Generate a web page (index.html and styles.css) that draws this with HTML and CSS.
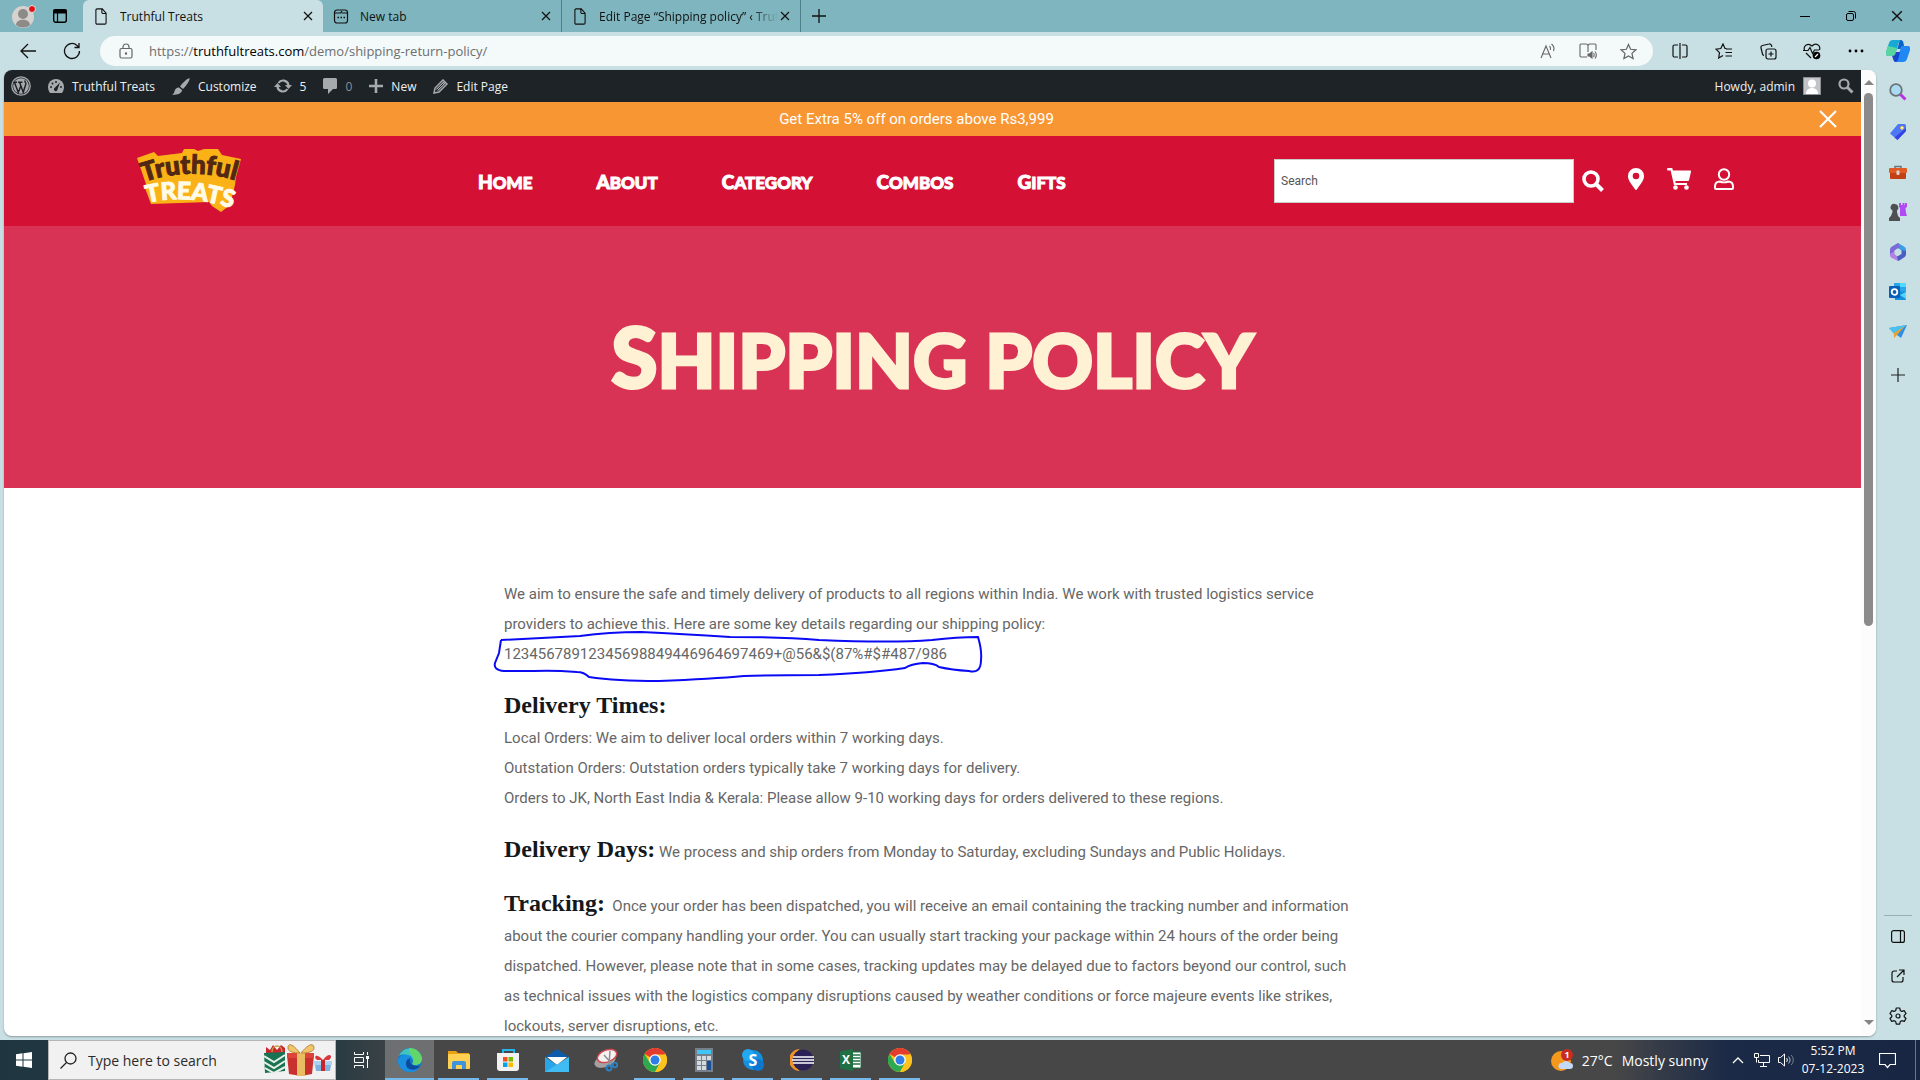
FILE: index.html
```
<!DOCTYPE html>
<html lang="en">
<head>
    <meta charset="UTF-8">
    <meta name="viewport" content="width=device-width, initial-scale=1.0">
    <title>Truthful Treats</title>
    <link rel="stylesheet" href="styles.css">
</head>
<body>
    <svg class="sprite" aria-hidden="true">
        <symbol id="doc" viewBox="0 0 14 20"><path d="M2.500 1h6L13 6v11.500a1.500 1.500 0 0 1-1.500 1.500h-9A1.500 1.500 0 0 1 1 17.500v-15A1.500 1.500 0 0 1 2.500 1zM8 1v4a1.500 1.500 0 0 0 1.500 1.500H13" fill="none" stroke="#111" stroke-width="1.300"/></symbol>
        <symbol id="cross" viewBox="0 0 10 10"><path d="M1 1l8 8M9 1L1 9" fill="none" stroke="currentColor" stroke-width="1.200"/></symbol>
        <symbol id="chrome" viewBox="0 0 24 24">
            <circle cx="12" cy="12" r="12" fill="#fcc31e"/>
            <path d="M12 12L1.600 6A12 12 0 0 1 22.400 6z" fill="#e33b2e"/>
            <path d="M1.600 6A12 12 0 0 0 12 24l5-9H7z" fill="#2da94f"/>
            <path d="M12 6.500h10.700A12 12 0 0 1 12 24l5-9z" fill="#fcc31e"/>
            <circle cx="12" cy="12" r="5.800" fill="#fff"/>
            <circle cx="12" cy="12" r="4.500" fill="#2f7de9"/>
        </symbol>
    </svg>

    <!-- browser tabs -->
    <div class="titlebar">
        <button class="profile" aria-label="Profile">
            <svg width="24" height="24" viewBox="0 0 24 24"><circle cx="11" cy="13" r="11" fill="#d5d2cf"/><circle cx="11" cy="10" r="5" fill="#8e8a87"/><path d="M4 21c0-7 14-7 14 0a11 11 0 0 1-14 0z" fill="#8e8a87"/><circle cx="20" cy="5" r="3.500" fill="#e60f0f" stroke="#d9e6e8"/></svg>
        </button>
        <button class="workspaces" aria-label="Tab actions">
            <svg width="14" height="14" viewBox="0 0 14 14"><rect x="0.700" y="0.700" width="12.600" height="12.600" rx="2" fill="none" stroke="#000" stroke-width="1.400"/><path d="M1 1h12v3H1zM4.500 4v9" stroke="#000" stroke-width="1.200"/></svg>
        </button>
        <div class="tab active">
            <svg class="tab-icon" width="14" height="17"><use href="#doc"/></svg>
            <span class="tab-title">Truthful Treats</span>
            <button aria-label="Close tab"><svg width="10" height="10"><use href="#cross"/></svg></button>
        </div>
        <div class="tab">
            <svg class="tab-icon" width="15" height="15" viewBox="0 0 15 15" fill="none" stroke="#111" stroke-width="1.200"><rect x="1" y="1" width="13" height="13" rx="2.500"/><path d="M1 4h6l1.500-2M8 4h6"/><path d="M4 8.500h1.500M7 8.500h1.500M10 8.500h1.500" stroke-width="1.600"/></svg>
            <span class="tab-title">New tab</span>
            <button aria-label="Close tab"><svg width="10" height="10"><use href="#cross"/></svg></button>
        </div>
        <div class="tab">
            <svg class="tab-icon" width="14" height="17"><use href="#doc"/></svg>
            <span class="tab-title fade">Edit Page “Shipping policy” ‹ Trut</span>
            <button aria-label="Close tab"><svg width="10" height="10"><use href="#cross"/></svg></button>
        </div>
        <button class="new-tab" aria-label="New tab"><svg width="14" height="14" viewBox="0 0 14 14"><path d="M7 0v14M0 7h14" stroke="#111" stroke-width="1.300"/></svg></button>
        <div class="window-buttons">
            <button aria-label="Minimize"><svg width="12" height="12" viewBox="0 0 12 12"><path d="M1 6.500h10" stroke="#000"/></svg></button>
            <button aria-label="Restore"><svg width="12" height="12" viewBox="0 0 12 12" fill="none" stroke="#000"><rect x="1.500" y="3.500" width="7" height="7" rx="1.500"/><path d="M3.500 1.500h5a2 2 0 0 1 2 2v5"/></svg></button>
            <button aria-label="Close"><svg width="12" height="12"><use href="#cross"/></svg></button>
        </div>
    </div>

    <!-- address bar -->
    <div class="toolbar">
        <button aria-label="Back"><svg width="18" height="18" viewBox="0 0 18 18" fill="none" stroke="#111" stroke-width="1.300"><path d="M17 9H2M9 2L2 9l7 7"/></svg></button>
        <button aria-label="Refresh"><svg width="18" height="18" viewBox="0 0 18 18" fill="none" stroke="#111" stroke-width="1.300"><path d="M16.500 9a7.500 7.500 0 1 1-2.500-5.600L16 5.500M16 1v4.500h-4.500"/></svg></button>
        <div class="address">
            <svg width="14" height="16" viewBox="0 0 14 16" fill="none" stroke="#666" stroke-width="1.200"><rect x="1" y="5.500" width="12" height="9.500" rx="1.500"/><path d="M4 5.500V4a3 3 0 0 1 6 0v1.500"/><circle cx="7" cy="10.500" r="0.600" fill="#666"/></svg>
            <a class="url" href="#">https://<b>truthfultreats.com</b>/demo/shipping-return-policy/</a>
            <button aria-label="Read aloud"><svg width="16" height="16" viewBox="0 0 16 16" fill="none" stroke="#666" stroke-width="1.100"><path d="M1 15L6 3l5 12M3 11h6M9.500 3c1 1 1.300 2 1 4M11.500 1c2.500 2 3 4.500 2 7"/></svg></button>
            <button aria-label="Immersive reader"><svg width="18" height="16" viewBox="0 0 18 16" fill="none" stroke="#666" stroke-width="1.100"><path d="M8 14H2a1 1 0 0 1-1-1V2a1 1 0 0 1 1-1h5a2 2 0 0 1 2 2v6M9 3a2 2 0 0 1 2-2h5a1 1 0 0 1 1 1v5"/><path d="M9 11h1.500L13 9v6l-2.500-2H9z" fill="#666"/><path d="M14.500 10c.800 1.200.800 2.800 0 4M16 8.500c1.500 2 1.500 5 0 7"/></svg></button>
            <button aria-label="Favorite"><svg width="17" height="17" viewBox="0 0 24 24" fill="none" stroke="#666" stroke-width="1.700"><path d="M12 2l3 6.800 7.500.8-5.600 5 1.600 7.400L12 18.300 5.500 22l1.600-7.400-5.600-5L9 8.800z"/></svg></button>
        </div>
        <div class="extensions">
            <button aria-label="Split screen"><svg width="16" height="16" viewBox="0 0 16 16" fill="none" stroke="#111" stroke-width="1.200"><path d="M8 0v16M6 2H2.500A1.500 1.500 0 0 0 1 3.500v9A1.500 1.500 0 0 0 2.500 14H6M10 2h3.500A1.500 1.500 0 0 1 15 3.500v9a1.500 1.500 0 0 1-1.500 1.500H10"/></svg></button>
            <button aria-label="Favorites"><svg width="18" height="16" viewBox="0 0 18 16" fill="none" stroke="#111" stroke-width="1.200"><path d="M11.500 5.500H10L8 1 5.800 5.500 1 6.200l3.500 3.500L3.700 15 8 12.500M11 6h6M10.500 9.500H17M10.500 13H17"/></svg></button>
            <button aria-label="Collections"><svg width="17" height="17" viewBox="0 0 17 17" fill="none" stroke="#111" stroke-width="1.200"><rect x="6" y="6" width="10" height="10" rx="2"/><path d="M11 8.500v5M8.500 11h5M4 12.500A2 2 0 0 1 2.500 11L1 5a2 2 0 0 1 1.500-2.500L9 1a2 2 0 0 1 2.500 1.500l.3 1.500"/></svg></button>
            <button aria-label="Browser essentials"><svg width="18" height="17" viewBox="0 0 18 17" fill="none" stroke="#111" stroke-width="1.200"><path d="M8 15L3 10M1.500 7C0 3 5 -1 9 3c4-4 9-.500 7.500 4M0 7.500h5l2-3 2.500 6 2-3.500H16"/><circle cx="13.500" cy="12.500" r="3.800" fill="#000" stroke="none"/><path d="M12 14l3-3" stroke="#fff"/></svg></button>
            <button aria-label="Settings and more"><svg width="16" height="4" viewBox="0 0 16 4"><circle cx="2" cy="2" r="1.400"/><circle cx="8" cy="2" r="1.400"/><circle cx="14" cy="2" r="1.400"/></svg></button>
        </div>
        <button class="copilot" aria-label="Copilot"><svg width="24" height="22" viewBox="0 0 24 22"><path d="M7 0h8c-2 1-2.500 3-3.500 7l-2 6c-.700 2-1.500 3-3.500 3H2c-2 0-2.500-2-2-4L3 3c.5-2 2-3 4-3z" fill="#16a9d4"/><path d="M0 12L2 6l9 2-1.500 5c-.700 2-1.500 3-3.500 3H2c-2 0-2.500-2-2-4z" fill="#58d6a0"/><path d="M17 22H9c2-1 2.500-3 3.500-7l2-6c.7-2 1.500-3 3.500-3h4c2 0 2.500 2 2 4l-3 9c-.500 2-2 3-4 3z" fill="#2187f5"/><path d="M6 16c2.500 0 3-1 4-4l4 0-1.500 6c-.700 2.500-1.500 4-3 4-2 0-2-3-3.500-6z" fill="#1846c9"/><path d="M15 0c2 0 2.500 2 3 6-2 0-3 1-3.500 3h-3.200L13 3c.5-2 .8-3 2-3z" fill="#0a63c9"/></svg></button>
    </div>

    <div class="workarea">
        <div class="viewport">
            <div class="site">
                <!-- admin bar -->
                <div class="adminbar">
                    <a href="#" class="wp" aria-label="About WordPress"><svg width="20" height="20" viewBox="0 0 20 20"><circle cx="10" cy="10" r="9.200" fill="none" stroke="#a7aaad" stroke-width="1.300"/><circle cx="10" cy="10" r="7.800" fill="#a7aaad"/><path d="M3.500 6.500l3.800 10L10 9.500M8.500 6l3.700 10.300 2.600-8c.400-1.500-1-2-1-3.800M2.500 6.200H6M7 6.200h4.500" fill="none" stroke="#1d2327" stroke-width="1.500"/></svg></a>
                    <a href="#"><svg width="16" height="14" viewBox="0 0 16 14"><path d="M8 0a8 8 0 0 1 8 8c0 2.500-1 4.500-2 6H2C1 12.500 0 10.500 0 8a8 8 0 0 1 8-8z" fill="#a7aaad"/><g fill="#1d2327"><circle cx="3" cy="8" r="1"/><circle cx="4.500" cy="4.500" r="1"/><circle cx="8" cy="3" r="1"/><circle cx="13" cy="8" r="1"/><path d="M12 3.500l-2.500 7a1.800 1.800 0 1 1-3-1.500z"/></g></svg>Truthful Treats</a>
                    <a href="#"><svg width="18" height="17" viewBox="0 0 18 17" fill="#a7aaad"><path d="M17.500.500c1 1-3 7-6.500 10.500L8 8.500C11 4.500 16.500-.500 17.500.500zM7 9.500l3 2.500c0 3-4 5.500-10 4.500 2.500-1 2-2 3-4.500.800-2 2.500-2.800 4-2.500z"/></svg>Customize</a>
                    <a href="#"><svg width="18" height="16" viewBox="0 0 18 16" fill="none" stroke="#a7aaad" stroke-width="2.200"><path d="M3.500 9a5.500 5.500 0 0 0 10 2M14.500 7a5.500 5.500 0 0 0-10-2"/><path d="M0 9l3.500-4L7 9zM11 7l3.500 4L18 7z" fill="#a7aaad" stroke="none"/></svg>5</a>
                    <a href="#" class="dim"><svg width="14" height="16" viewBox="0 0 14 16" fill="#a7aaad"><path d="M1.500 0h11A1.500 1.500 0 0 1 14 1.500v8a1.500 1.500 0 0 1-1.500 1.500H10l-5 5v-5H1.500A1.500 1.500 0 0 1 0 9.500v-8A1.500 1.500 0 0 1 1.500 0z"/></svg>0</a>
                    <a href="#"><svg width="14" height="14" viewBox="0 0 14 14"><path d="M7 0v14M0 7h14" stroke="#a7aaad" stroke-width="2.600"/></svg>New</a>
                    <a href="#"><svg width="15" height="15" viewBox="0 0 15 15"><path d="M1 14l1-5 8-8 4 4-8 8z" fill="none" stroke="#a7aaad" stroke-width="1.500"/><path d="M3 10l7.500-7.500 2 2L5 12z" fill="#a7aaad"/><path d="M3.500 11.500l7-7" stroke="#1d2327"/></svg>Edit Page</a>
                    <a href="#" class="howdy">Howdy, admin<svg width="18" height="18" viewBox="0 0 18 18"><path fill="#c3c4c7" stroke="#8c8f94" d="M.500.500h17v17H.500z"/><circle cx="9" cy="6.500" r="4" fill="#fff"/><path d="M3 17c0-8 12-8 12 0z" fill="#fff"/></svg></a>
                    <button aria-label="Search site"><svg width="16" height="16" viewBox="0 0 16 16" fill="none" stroke="#a7aaad"><circle cx="6" cy="6" r="4.500" stroke-width="2.200"/><path d="M9.500 9.500l5 5" stroke-width="3"/></svg></button>
                </div>

                <div class="offer">
                    <span>Get Extra 5% off on orders above Rs3,999</span>
                    <button aria-label="Dismiss"><svg width="18" height="18" viewBox="0 0 18 18"><path d="M1 1l16 16M17 1L1 17" stroke="#fff" stroke-width="2.200"/></svg></button>
                </div>

                <header class="site-header">
                    <a href="#" class="logo" aria-label="Truthful Treats">
                        <svg width="108" height="66" viewBox="0 0 108 66">
                            <defs>
                                <path id="arc-top" d="M8 34Q54 18 102 33"/>
                                <path id="arc-bottom" d="M11 55Q50 45 98 61"/>
                            </defs>
                            <path d="M1 10l17-6 4 4 24-3 2-4h10l4 2 6-2h14l4 6 19 4-5 18-1 8-5 20-9 7-9-6-3-4-58 2-6-16 1-4z" fill="#fbb216"/>
                            <text class="logo-top"><textPath href="#arc-top">Truthful</textPath></text>
                            <text class="logo-bottom"><textPath href="#arc-bottom">TREATS</textPath></text>
                        </svg>
                    </a>
                    <nav>
                        <a href="#">Home</a>
                        <a href="#">About</a>
                        <a href="#">Category</a>
                        <a href="#">Combos</a>
                        <a href="#">Gifts</a>
                    </nav>
                    <form class="site-search">
                        <input type="text" placeholder="Search" aria-label="Search products">
                        <button type="button" aria-label="Search"><svg width="22" height="22" viewBox="0 0 22 22" fill="none" stroke="#fff"><circle cx="9" cy="9" r="7" stroke-width="3.600"/><path d="M14 14l6.500 6.500" stroke-width="4"/></svg></button>
                    </form>
                    <div class="shortcuts">
                        <a href="#" aria-label="Stores"><svg width="16" height="22" viewBox="0 0 16 22"><path fill-rule="evenodd" fill="#fff" d="M8 0a8 8 0 0 1 8 8c0 4-2 6-7 13.300a1.200 1.200 0 0 1-2 0C2 14 0 12 0 8a8 8 0 0 1 8-8zm0 4.700a3.300 3.300 0 1 0 0 6.600 3.300 3.300 0 0 0 0-6.600z"/></svg></a>
                        <a href="#" aria-label="Cart"><svg width="24" height="22" viewBox="0 0 24 22" fill="#fff"><path d="M0 1a1 1 0 0 1 1-1h4.300l.6 2.500H23a1 1 0 0 1 1 1.300l-2 8.500a1 1 0 0 1-1 .8H8.300l.4 1.900h11.500l-.4 2H7L3.600 2.500H1A1 1 0 0 1 0 1.500z"/><circle cx="8.500" cy="19.500" r="2.300"/><circle cx="19.500" cy="19.500" r="2.300"/></svg></a>
                        <a href="#" aria-label="Account"><svg width="20" height="22" viewBox="0 0 20 22" fill="none" stroke="#fff" stroke-width="2"><circle cx="10" cy="6.500" r="5.200"/><path d="M6 13.500c2 1 6 1 8 0 3 0 5 2 5 5V20a1 1 0 0 1-1 1H2a1 1 0 0 1-1-1v-1.500c0-3 2-5 5-5z"/></svg></a>
                    </div>
                </header>

                <section class="hero">
                    <h1>Shipping policy</h1>
                </section>

                <main class="policy">
                    <p>
                        We aim to ensure the safe and timely delivery of products to all regions within India. We work with trusted logistics service providers to achieve this. Here are some key details regarding our shipping policy:<br>
                        <span class="marked">12345678912345698849446964697469+@56&amp;$(87%#$#487/986
                            <svg class="scribble" width="494" height="56" viewBox="0 0 494 56"><path d="M9 10Q48 8 88 6Q117 2 149 2Q190 4 238 7Q290 7 327 10Q400 13 440 10Q465 7 486 7Q490 20 489 30Q489 44 477 41Q460 40 447 37Q442 33 431 33Q419 34 413 38Q380 43 327 45Q280 45 252 46Q220 49 167 51Q124 51 97 47Q92 42 85 42Q60 40 42 41L12 41Q1 40 3 33L7 23L9 10"/></svg>
                        </span>
                    </p>
                    <p>
                        <strong>Delivery Times:</strong><br>
                        Local Orders: We aim to deliver local orders within 7 working days.<br>
                        Outstation Orders: Outstation orders typically take 7 working days for delivery.<br>
                        Orders to JK, North East India &amp; Kerala: Please allow 9-10 working days for orders delivered to these regions.
                    </p>
                    <p><strong>Delivery Days:</strong> We process and ship orders from Monday to Saturday, excluding Sundays and Public Holidays.</p>
                    <p><strong>Tracking:</strong>&nbsp; Once your order has been dispatched, you will receive an email containing the tracking number and information about the courier company handling your order. You can usually start tracking your package within 24 hours of the order being dispatched. However, please note that in some cases, tracking updates may be delayed due to factors beyond our control, such as technical issues with the logistics company disruptions caused by weather conditions or force majeure events like strikes, lockouts, server disruptions, etc.</p>
                </main>
            </div>
            <div class="scrollbar">
                <svg width="10" height="6" viewBox="0 0 10 6"><path d="M0 6l5-5 5 5z" fill="#858585"/></svg>
                <div class="track"><div class="thumb"></div></div>
                <svg width="10" height="6" viewBox="0 0 10 6"><path d="M0 0l5 5 5-5z" fill="#858585"/></svg>
            </div>
        </div>

        <aside class="sidebar">
            <button aria-label="Search"><svg width="18" height="18" viewBox="0 0 18 18"><circle cx="7" cy="7" r="5.800" fill="#a9dcf2" stroke="#6d7478" stroke-width="1.800"/><path d="M11.500 11.500l5 5" stroke="#b833e8" stroke-width="3"/></svg></button>
            <button aria-label="Shopping"><svg width="18" height="18" viewBox="0 0 18 18"><path d="M9 1h6.500A1.500 1.500 0 0 1 17 2.500V8l-8.500 9L1 10.500z" fill="#4c78f6"/><path d="M17 5v3l-8.500 9-3-2.500z" fill="#3442e6"/><circle cx="13" cy="4.800" r="1.500" fill="#fff" stroke="#f2c230"/></svg></button>
            <button aria-label="Tools"><svg width="18" height="18" viewBox="0 0 18 18"><path d="M6 5V3.500h6V5" fill="none" stroke="#6d7478" stroke-width="1.500"/><rect y="5" width="18" height="5" rx="1" fill="#e05a24"/><path d="M1 10h16v5a1 1 0 0 1-1 1H2a1 1 0 0 1-1-1z" fill="#c33f14"/><rect x="7.500" y="7.500" width="3" height="4.500" rx="1" fill="#d5dadd"/></svg></button>
            <button aria-label="Games"><svg width="18" height="18" viewBox="0 0 18 18"><path d="M10 0h2v2h1.500V0h2v2H16V0h2v4l-1.500 1 .5 5 1 3h-7V5L10 4z" fill="#b14af2"/><path d="M6 1a3.500 3.500 0 0 1 2 6.300V9L9 13l2 2v3H0v-3l2-2 1.500-4V7.500A3.500 3.500 0 0 1 6 1z" fill="#4d4f50"/></svg></button>
            <button aria-label="Microsoft 365"><svg width="18" height="18" viewBox="0 0 18 18"><path d="M9 0l6 3.500c1.500 1 2 2 2 3.500v5l-4.500-2V7.500L8.500 5 5 3z" fill="#3a9de8"/><path d="M9 0L3 3.500C1.500 4.500 1 5.500 1 7v5l4.500-1.500v-3L11 4z" fill="#7c6ad6"/><path d="M1 11v1c0 1.500.5 2 2 3l6 3 4-2-1-4-3.500 1.500L5.500 11V8z" fill="#b083e4"/><path d="M17 8v3c0 1.500-.5 2.500-2 3.500L9 18l-1-4.500 4.500-3V7z" fill="#4a5fc4"/><path d="M9 5.500l3.300 2v3.500L9 13l-3.300-2V7.500z" fill="#c8dfe3"/></svg></button>
            <button aria-label="Outlook"><svg width="18" height="18" viewBox="0 0 18 18"><path d="M5 0h12v9H5z" fill="#28a8ea"/><path d="M11 0h6v4h-6z" fill="#50d9ff"/><path d="M5 7l12 2v7a1 1 0 0 1-1 1H6z" fill="#1490df"/><path d="M17 9v7l-6-4z" fill="#50d9ff"/><rect y="3" width="11" height="12" rx="1" fill="#0a5fb8"/><circle cx="5.500" cy="9" r="2.800" fill="none" stroke="#fff" stroke-width="1.800"/></svg></button>
            <button aria-label="Drop"><svg width="18" height="18" viewBox="0 0 18 18"><path d="M0 5l18-3-6 13-4-3z" fill="#2f8fe8"/><path d="M0 5l18-3L5 11z" fill="#49c0f0"/><path d="M5 10L16 3 8 12l-3 3z" fill="#e9a32b"/></svg></button>
            <button aria-label="Customize sidebar" class="add"><svg width="14" height="14" viewBox="0 0 14 14"><path d="M7 0v14M0 7h14" stroke="#222" stroke-width="1.200"/></svg></button>
            <div class="sidebar-bottom">
                <button aria-label="Hide sidebar"><svg width="14" height="13" viewBox="0 0 14 13" fill="none" stroke="#111" stroke-width="1.200"><rect x="0.600" y="0.600" width="12.800" height="11.800" rx="2"/><path d="M9.500 0v13"/></svg></button>
                <button aria-label="Open link"><svg width="14" height="14" viewBox="0 0 14 14" fill="none" stroke="#111" stroke-width="1.200"><path d="M6 2H3a2 2 0 0 0-2 2v7a2 2 0 0 0 2 2h7a2 2 0 0 0 2-2V8M8 1h5v5M13 1L6 8"/></svg></button>
                <button aria-label="Settings"><svg width="18" height="18" viewBox="0 0 18 18" fill="none" stroke="#111" stroke-width="1.200"><circle cx="9" cy="9" r="2"/><path d="M7.300 1h3.400l.6 2.500 1.500.9 2.500-.7L17 6.600l-1.800 1.800v1.400L17 11.500l-1.700 2.900-2.500-.7-1.500.9-.6 2.500H7.300l-.6-2.500-1.500-.9-2.500.7L1 11.500l1.800-1.700V8.400L1 6.600l1.700-2.900 2.500.7 1.500-.9z" stroke-linejoin="round"/></svg></button>
            </div>
        </aside>
    </div>

    <!-- windows taskbar -->
    <div class="taskbar">
        <button class="start" aria-label="Start"><svg width="16" height="16" viewBox="0 0 16 16" fill="#fff"><path d="M0 2.300L6.500 1.300v6.200H0zM7.500 1.200L16 0v7.500H7.500zM0 8.500h6.500v6.200L0 13.700zM7.500 8.500H16V16l-8.500-1.200z"/></svg></button>
        <label class="task-search">
            <svg width="17" height="17" viewBox="0 0 17 17" fill="none" stroke="#222" stroke-width="1.300"><circle cx="10.500" cy="6.500" r="5.500"/><path d="M6.500 10.500L0.500 16.500"/></svg>
            <input type="text" placeholder="Type here to search">
            <svg width="68" height="34" viewBox="0 0 68 34">
                <path d="M2 10V4l4 3 3-5 4 5 4-5 4 3v6z" fill="#c9252c"/><path d="M8 9c0-8 10-8 10 0" fill="none" stroke="#c99b4a" stroke-width="1.500"/>
                <path d="M0 10l21-1v19L1 30z" fill="#197253"/>
                <path d="M0 13l10 6 11-7M0 19l10 6 11-7M1 25l9 5 11-6" fill="none" stroke="#e8efe4" stroke-width="2"/>
                <path d="M23 12h27l-2 19-11 2-12-2z" fill="#c8312d"/><path d="M23 10h27v5H23z" fill="#dd4338"/>
                <path d="M33 10h8v23h-8z" fill="#e9bd62"/><path d="M36 10C28 0 24 0 24 5c0 4 6 5 12 5zM37 10C45 0 50 0 50 5c0 4-7 5-13 5z" fill="#efc66c" stroke="#b98634"/>
                <path d="M50 18h18v4H50z" fill="#a9d3f0"/><path d="M51 22h16l-1 6H52z" fill="#7fb3df"/><path d="M57 17h4v11h-4z" fill="#c9252c"/><path d="M59 17c-7-8-10-3-6 0zM59 17c6-9 11-4 6 0z" fill="#d8383c"/>
            </svg>
        </label>
        <button class="task" aria-label="Task view"><svg width="16" height="16" viewBox="0 0 16 16" fill="none" stroke="#fff"><path d="M1.500 0v2.500h9V0M1.500 16v-2.500h9V16M1.500 5.500h9v5h-9zM14.500 0v3M14.500 7v9"/><path d="M13 4h3v3h-3z" fill="#fff" stroke="none"/></svg></button>
        <button class="task current" aria-label="Edge"><svg width="24" height="24" viewBox="0 0 24 24"><circle cx="12" cy="12" r="12" fill="#1677c9"/><path d="M1 8C5-2 20-3 24 10c0 5-3 7-7 7-3 0-3-1-2-3 1-5-8-10-14-6z" fill="#3fc4c0"/><path d="M11 0c8 0 12 5 13 10 0 5-3 7-7 7-2 0-3-1-2-3C18 9 10 6 11 0z" fill="#62d66b"/><path d="M0 13C1 6 9 5 14 9c-6 0-8 8-2 12 3 2 7 1 10-2-3 4-6 5-10 5C5 24 0 19 0 13z" fill="#1a8fe0"/><path d="M8 16c0-3 1-5 4-5-1 4 2 8 10 7-3 5-14 5-14-2z" fill="#0d4b9c"/></svg></button>
        <button class="task open" aria-label="File Explorer"><svg width="22" height="20" viewBox="0 0 22 20"><path d="M0 1h8l2 2h11v4H0z" fill="#e8a213"/><rect y="4" width="22" height="15" rx="1" fill="#ffd152"/><path d="M4 19v-6a2 2 0 0 1 2-2h10a2 2 0 0 1 2 2v6h-4v-4H8v4z" fill="#3f93dc"/></svg></button>
        <button class="task open" aria-label="Store"><svg width="24" height="24" viewBox="0 0 24 24"><path d="M7 6V2h11v4" fill="none" stroke="#24b5ef" stroke-width="2"/><path d="M1 5h22v15a3 3 0 0 1-3 3H4a3 3 0 0 1-3-3z" fill="#f2f2f2"/><path d="M7 9h4.500v4.500H7z" fill="#f25022"/><path d="M12.500 9H17v4.500h-4.500z" fill="#7fba00"/><path d="M7 14.500h4.500V19H7z" fill="#00a4ef"/><path d="M12.500 14.500H17V19h-4.500z" fill="#ffb900"/></svg></button>
        <button class="task" aria-label="Mail"><svg width="24" height="23" viewBox="0 0 24 23"><path d="M0 8l12-8 12 8z" fill="#0c5cab"/><path d="M2 8h20l-10 8z" fill="#fff"/><path d="M0 8l12 8 12-8v15H0z" fill="#29a5ea"/><path d="M24 8v15H0z" fill="#4cc4f7" opacity=".7"/></svg></button>
        <button class="task" aria-label="Snipping Tool"><svg width="24" height="24" viewBox="0 0 24 24"><ellipse cx="11" cy="13" rx="11" ry="6" transform="rotate(-20 11 13)" fill="#a6a0a0"/><ellipse cx="13" cy="8" rx="10" ry="6" transform="rotate(-20 13 8)" fill="#f7f2f2" stroke="#cf4a50" stroke-width="1.500"/><path d="M10 7l9 10M16 3l-1 14" stroke="#8d9093" stroke-width="1.500"/><g fill="none" stroke="#2c83c4" stroke-width="1.800"><circle cx="15" cy="20" r="2.500"/><circle cx="21" cy="17" r="2.300"/></g></svg></button>
        <button class="task open" aria-label="Chrome"><svg width="24" height="24"><use href="#chrome"/></svg></button>
        <button class="task open" aria-label="Calculator"><svg width="18" height="24" viewBox="0 0 18 24"><path d="M0 0h18v24H0z" fill="#75808c"/><path d="M2 2h14v4H2z" fill="#3fc6f4"/><path d="M2 8h4v4H2zM7 8h4v4H7zM12 8h4v4h-4zM2 13h4v4H2zM7 13h4v4H7zM2 18h4v4H2zM7 18h4v4H7z" fill="#d5dade"/><path d="M12 13h4v9h-4z" fill="#174e96"/></svg></button>
        <button class="task open" aria-label="Skype"><svg width="22" height="22" viewBox="0 0 22 22"><circle cx="11" cy="11" r="10" fill="#1490df"/><circle cx="6" cy="6" r="6" fill="#22a7f2"/><circle cx="16" cy="16" r="6" fill="#0b78d0"/><text x="11" y="17" class="glyph skype">S</text></svg></button>
        <button class="task open" aria-label="Eclipse"><svg width="24" height="22" viewBox="0 0 24 22"><path d="M10 0a11 11 0 0 0 0 22C4 18 4 4 10 0z" fill="#f0932a"/><circle cx="13" cy="11" r="10.500" fill="#2c2255"/><path d="M3 8h21M2 11h22M3 14h21" stroke="#fff" stroke-width="1.500"/></svg></button>
        <button class="task open" aria-label="Excel"><svg width="22" height="22" viewBox="0 0 22 22"><path d="M11 3h10v16H11z" fill="#fff" stroke="#1f7145"/><path d="M13 6h7M13 9h7M13 12h7M13 15h7" stroke="#1f7145" stroke-width="1.500"/><path d="M0 2.500L13 0v22L0 19.500z" fill="#1f7145"/><text x="6" y="15" class="glyph">X</text></svg></button>
        <button class="task open" aria-label="Chrome profile 2"><svg width="24" height="24"><use href="#chrome"/></svg></button>

        <div class="tray">
            <button class="weather">
                <svg width="22" height="22" viewBox="0 0 22 22"><circle cx="10" cy="12" r="10" fill="#f4991d"/><path d="M10 20h9a3 3 0 0 0 0-6 5 5 0 0 0-8 0 3 3 0 0 0-1 6z" fill="#c4d9f8"/><circle cx="16" cy="6" r="6" fill="#c92c22"/><text x="16" y="9" class="glyph badge">1</text></svg>
                <span>27°C</span><span>Mostly sunny</span>
            </button>
            <button aria-label="Hidden icons"><svg width="12" height="8" viewBox="0 0 12 8"><path d="M1 7l5-5 5 5" fill="none" stroke="#fff" stroke-width="1.300"/></svg></button>
            <button aria-label="Network"><svg width="16" height="14" viewBox="0 0 16 14" fill="none" stroke="#fff"><path d="M6 2.500h9.500v7h-11V7M9.500 9.500v4M6 13.500h7M.5.500h4v4h-4zM2.500 4.500v5"/></svg></button>
            <button aria-label="Volume"><svg width="17" height="14" viewBox="0 0 17 14" fill="none" stroke="#fff"><path d="M.500 4.500h2l4-3.500v12l-4-3.500h-2zM8.500 5c1 1 1 3 0 4"/><path d="M10.500 3.500c2 2 2 5 0 7" opacity=".7"/><path d="M13 2c3 3 3 7 0 10" opacity=".4"/></svg></button>
            <button class="clock">5:52 PM<br>07-12-2023</button>
            <button class="notifications" aria-label="Notifications"><svg width="17" height="17" viewBox="0 0 17 17"><path d="M.500 1.500h16v11H11L8.500 15.500 6 12.500H.500z" fill="none" stroke="#fff" stroke-width="1.200"/></svg></button>
        </div>
    </div>
</body>
</html>
```
FILE: styles.css
```
* {
    box-sizing: border-box;
}

body {
    margin: 0;
    height: 100vh;
    display: flex;
    flex-direction: column;
    overflow: hidden;
    background-color: #c8dfe3;
    font-family: "Open Sans", "Noto Sans", sans-serif;
    font-size: 12px;
    color: #111;
}

button {
    display: flex;
    align-items: center;
    justify-content: center;
    flex: none;
    padding: 0;
    border: none;
    background: none;
    color: inherit;
    font: inherit;
    cursor: pointer;
}

a {
    color: inherit;
    text-decoration: none;
}

svg {
    flex: none;
}

.sprite {
    display: none;
}

/* tabs */
.titlebar {
    display: flex;
    flex: none;
    height: 32px;
    background-color: #7fb5be;
}

.profile {
    width: 48px;
}

.workspaces {
    width: 24px;
    margin-right: 11px;
}

.tab {
    display: flex;
    align-items: center;
    width: 239px;
    padding: 0 10px;
    border-right: 1px solid #4d8189;
}

.tab.active {
    width: 240px;
    background-color: #c8dfe3;
    border-right: none;
    border-radius: 6px 6px 0 0;
}

.tab-icon {
    width: 16px;
}

.tab-title {
    flex: 1;
    margin: 0 2px 0 11px;
    overflow: hidden;
    white-space: nowrap;
}

.fade {
    mask-image: linear-gradient(to right, #000 85%, transparent);
}

.new-tab {
    width: 36px;
}

.window-buttons {
    display: flex;
    margin-left: auto;
}

.window-buttons button {
    width: 46px;
}

/* toolbar */
.toolbar {
    display: flex;
    align-items: center;
    flex: none;
    height: 38px;
    padding: 0 6px;
}

.toolbar > button {
    width: 44px;
}

.address {
    display: flex;
    align-items: center;
    flex: 1;
    height: 30px;
    margin-left: 6px;
    padding: 0 5px 0 19px;
    border-radius: 15px;
    background-color: #f4f9fa;
}

.address button {
    width: 40px;
}

.url {
    flex: 1;
    margin-left: 16px;
    color: #6b6f71;
    font-size: 13px;
}

.url b {
    color: #000;
    font-weight: normal;
}

.extensions {
    display: flex;
    margin-left: 5px;
}

.extensions button {
    width: 44px;
}

.toolbar .copilot {
    width: 32px;
    margin-left: 4px;
}

/* page frame */
.workarea {
    display: flex;
    flex: 1;
    min-height: 0;
    padding: 0 0 4px 4px;
}

.viewport {
    display: flex;
    flex: 1;
    min-width: 0;
    border-radius: 8px;
    overflow: hidden;
    background-color: #fff;
    box-shadow: 0 1px 2px rgba(0,0,0,0.3);
}

.site {
    flex: 1;
    min-width: 0;
    font-family: Roboto, sans-serif;
    font-size: 15px;
}

.scrollbar {
    display: flex;
    flex-direction: column;
    align-items: center;
    width: 15px;
    padding: 9px 0 10px;
    background-color: #fcfcfc;
}

.track {
    flex: 1;
    width: 9px;
    margin: 8px 0;
}

.thumb {
    height: 58%;
    border-radius: 5px;
    background-color: #8b8b8b;
}

.sidebar {
    display: flex;
    flex-direction: column;
    align-items: center;
    width: 44px;
    padding-top: 2px;
}

.sidebar button {
    width: 40px;
    height: 40px;
}

.sidebar .add {
    margin-top: 3px;
}

.sidebar-bottom {
    margin-top: auto;
    display: flex;
    flex-direction: column;
    align-items: center;
    width: 28px;
    border-top: 1px solid #9aafb2;
}

/* admin bar */
.adminbar {
    display: flex;
    align-items: center;
    gap: 17px;
    height: 32px;
    padding: 0 7px;
    background-color: #1d2327;
    color: #f0f0f1;
    font-family: "Open Sans", "Noto Sans", sans-serif;
    font-size: 12px;
}

.adminbar a {
    display: flex;
    align-items: center;
    gap: 8px;
}

.adminbar .dim {
    color: #8c8f94;
}

.adminbar .howdy {
    margin-left: auto;
}

/* offer strip */
.offer {
    display: flex;
    align-items: center;
    height: 34px;
    padding: 0 24px 0 10px;
    background-color: #f79633;
    color: #fff;
}

.offer span {
    flex: 1;
    text-align: center;
}

/* site header */
.site-header {
    display: flex;
    align-items: center;
    height: 90px;
    padding: 0 127px 0 132px;
    background-color: #d41035;
}

.logo svg {
    display: block;
    overflow: visible;
}

.logo-top,
.logo-bottom {
    font-family: Lato, sans-serif;
    font-weight: 900;
    stroke-width: 1px;
}

.logo-top {
    font-size: 26px;
    fill: #522814;
    stroke: #522814;
}

.logo-bottom {
    font-size: 24px;
    fill: #fffbe8;
    stroke: #fffbe8;
}

nav {
    display: flex;
    gap: 64px;
    margin-left: 234px;
}

nav a {
    display: block;
    color: #fff;
    font-family: Lato, sans-serif;
    font-size: 17px;
    font-weight: 900;
    text-transform: uppercase;
    -webkit-text-stroke: 1px #fff;
}

nav a::first-letter {
    font-size: 19px;
}

.site-search {
    display: flex;
    align-items: center;
    gap: 8px;
    margin-left: auto;
}

.site-search input {
    width: 300px;
    height: 44px;
    padding: 0 6px;
    border: 1px solid #ccc;
    font-family: Roboto, sans-serif;
    font-size: 12px;
}

.site-search input::placeholder {
    color: #555;
}

.shortcuts {
    display: flex;
    align-items: center;
    gap: 23px;
    margin-left: 24px;
}

/* hero */
.hero {
    display: flex;
    align-items: center;
    justify-content: center;
    height: 262px;
    background-color: #d83354;
}

.hero h1 {
    margin: 0;
    color: #fff1d3;
    font-family: Lato, sans-serif;
    font-size: 75px;
    font-weight: 900;
    line-height: 90px;
    text-transform: uppercase;
    -webkit-text-stroke: 3px #fff1d3;
}

.hero h1::first-letter {
    font-size: 84px;
}

/* policy text */
.policy {
    max-width: 857px;
    margin: 0 auto;
    padding: 91px 8px 0 0;
    color: #666;
    line-height: 30px;
}

.policy p {
    margin: 0 0 24px;
}

.policy strong {
    color: #14181c;
    font-family: "Liberation Serif", serif;
    font-size: 24px;
    font-weight: bold;
    line-height: 24px;
}

.marked {
    position: relative;
}

.scribble {
    position: absolute;
    left: -12px;
    top: -15px;
    fill: none;
    stroke: #0a0af5;
    stroke-width: 2;
}

/* taskbar */
.taskbar {
    display: flex;
    flex: none;
    height: 40px;
    background: linear-gradient(to right, #1f3540 0, #263a42 17%, #474747 22%, #474747 84%, #1b2a47 90%, #182643);
    color: #fff;
}

.start {
    width: 48px;
}

.task-search {
    display: flex;
    align-items: center;
    width: 288px;
    padding: 0 3px 0 11px;
    border: 1px solid #b5b5b5;
    background-color: #f1f1f1;
}

.task-search input {
    flex: 1;
    min-width: 0;
    margin-left: 11px;
    padding: 0;
    border: none;
    background: none;
    font-family: inherit;
    font-size: 14px;
}

.task-search input::placeholder {
    color: #2b2b2b;
}

.task {
    position: relative;
    width: 49px;
}

.task.current {
    background-color: #6d6f70;
}

.task.open::after,
.task.current::after {
    content: "";
    position: absolute;
    left: 4px;
    right: 4px;
    bottom: 0;
    height: 2px;
    background-color: #76b9ed;
}

.task.current::after {
    left: 0;
    right: 0;
}

.glyph {
    fill: #fff;
    font-size: 12px;
    font-weight: bold;
    text-anchor: middle;
}

.skype {
    font-size: 16px;
}

.badge {
    font-size: 9px;
}

.tray {
    display: flex;
    margin-left: auto;
    padding-right: 4px;
}

.tray button {
    width: 24px;
}

.tray .weather {
    width: auto;
    gap: 9px;
    margin-right: 18px;
    font-size: 14px;
}

.tray .clock {
    width: 70px;
    line-height: 18px;
}

.tray .notifications {
    width: 48px;
    padding-right: 8px;
    border-right: 1px solid #6c7587;
}
```
